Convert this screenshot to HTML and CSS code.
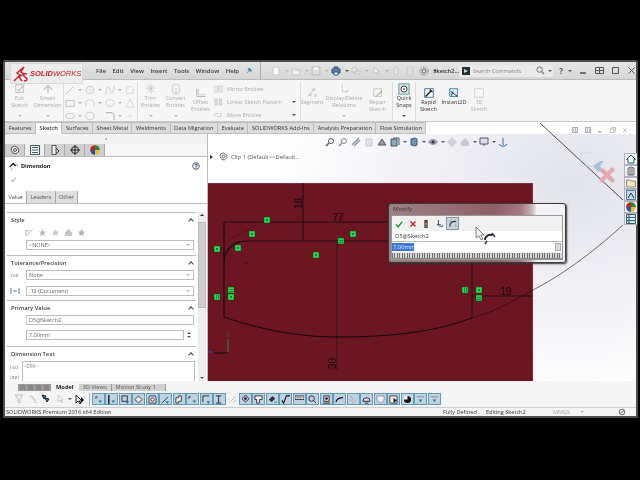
FILE: index.html
```html
<!DOCTYPE html>
<html lang="en">
<head>
<meta charset="utf-8">
<title>SOLIDWORKS</title>
<link rel="stylesheet" href="styles.css">
</head>
<body>
<div class="app">
  <header class="titlebar">
    <div class="logo">
      <svg class="logo-mark" viewBox="0 0 16 16"><path d="M1 15 7 9 4 7 11 1 8 6 11 8 6 11 9 15M11 15c3 0 4-2 2-3l-2-2c-1-2 1-3 3-2" fill="none" stroke="#c8202c" stroke-width="1.400"/></svg>
      <span class="logo-text">SOLID<span class="logo-thin">WORKS</span></span>
    </div>
    <nav class="menu"><span>File</span><span>Edit</span><span>View</span><span>Insert</span><span>Tools</span><span>Window</span><span>Help</span></nav>
    <svg class="pin" viewBox="0 0 8 8"><path d="M1 7 4 4M3 2l3 3M4 1l3 3-2 1-2-2z" stroke="#2b7f9e" fill="#3a9ac0"/></svg>
    <div class="quick">
      <svg class="qi" viewBox="0 0 10 10"><path d="M2 1h4l2 2v6H2z" fill="#fafafa" stroke="#c4c4c4"/></svg><i class="caret"></i>
      <svg class="qi" viewBox="0 0 10 10"><path d="M1 3h3l1 1h4v5H1z" fill="#eee" stroke="#c4c4c4"/></svg><i class="caret"></i>
      <svg class="qi" viewBox="0 0 10 10"><path d="M1 1h8v8H1z" fill="#ddd" stroke="#bbb"/><path d="M3 1h4v3H3z" fill="#f4f4f4"/></svg><i class="caret"></i>
      <svg class="qi" viewBox="0 0 10 10"><path d="M3 1h4v2h2v4H1V3h2z" fill="#5b80ac" stroke="#33557f"/><path d="M3 6h4v3H3z" fill="#fff" stroke="#33557f"/></svg><i class="caret dark"></i>
      <svg class="qi" viewBox="0 0 10 10"><path d="M1 2h5v4H1zM4 5h5v3H4z" fill="#e8e8e8" stroke="#c4c4c4"/></svg><i class="caret"></i>
      <svg class="qi" viewBox="0 0 10 10"><path d="M3 1v7l2-2 2 3 1-1-2-2h2z" fill="#f4f4f4" stroke="#c4c4c4"/></svg><i class="caret"></i>
      <svg class="qi" viewBox="0 0 10 10"><rect x="3" y="1" width="4" height="8" rx="2" fill="#e4e4e4" stroke="#c8c8c8"/></svg>
      <svg class="qi" viewBox="0 0 10 10"><path d="M2 1h6v8H2zM2 3h6M2 5h6M2 7h6" fill="#eee" stroke="#c8c8c8"/></svg>
      <svg class="qi" viewBox="0 0 10 10"><circle cx="5" cy="5" r="2" fill="none" stroke="#666"/><circle cx="5" cy="5" r="4" fill="none" stroke="#777" stroke-dasharray="1.500 1"/></svg><i class="caret dark"></i>
    </div>
    <span class="doc-name">Sketch2...</span>
    <div class="search">
      <svg class="search-ic" viewBox="0 0 8 8"><path d="M0 0h8v8H0z" fill="#26323a"/><path d="M2 2l4 2-4 2z" fill="#cfd8dd"/></svg>
      <span class="search-text">Search Commands</span>
      <svg class="lens" viewBox="0 0 10 10"><circle cx="4" cy="4" r="3" fill="none" stroke="#666"/><path d="M6 6l3 3" stroke="#666" stroke-width="1.200"/></svg>
      <i class="caret dark"></i>
    </div>
    <div class="winctl">
      <span class="help">?</span><i class="caret dark"></i>
      <svg class="wc" viewBox="0 0 9 9"><path d="M1 7h6" stroke="#444" stroke-width="1.400"/></svg>
      <svg class="wc" viewBox="0 0 9 9"><path d="M.5 1.500h8v6h-8zM4.500 1.500v6M.5 4.500h8" fill="none" stroke="#555"/></svg>
      <svg class="wc" viewBox="0 0 9 9"><path d="M1.500 1.500h6v6h-6z" fill="none" stroke="#555"/></svg>
      <svg class="wc" viewBox="0 0 9 9"><path d="M1.500 1.500l6 6M7.500 1.500l-6 6" stroke="#555"/></svg>
    </div>
  </header>

  <section class="ribbon">
    <div class="rgroup g1">
      <div class="rb w27"><svg class="ri" viewBox="0 0 14 14"><path d="M2 2h9v9H2z" fill="none" stroke="#bbb"/><path d="M4 7l2 2 6-7" fill="none" stroke="#b9c9b9" stroke-width="1.400"/></svg><span>Exit<br>Sketch</span><i class="caret"></i></div>
      <div class="rb w29"><svg class="ri" viewBox="0 0 14 14"><path d="M2 8l5-5 5 5M7 3v9" fill="none" stroke="#bbb" stroke-width="1.300"/></svg><span>Smart<br>Dimension</span><i class="caret"></i></div>
    </div>
    <div class="rgroup g2">
      <div class="tool-grid">
        <svg class="ti" viewBox="0 0 12 12"><path d="M1 11 10 2" stroke="#c4c4c4" stroke-width="1.200"/></svg><i class="caret"></i>
        <svg class="ti" viewBox="0 0 12 12"><circle cx="6" cy="6" r="4.500" fill="none" stroke="#c4c4c4"/><circle cx="6" cy="6" r="1" fill="#c4c4c4"/></svg><i class="caret"></i>
        <svg class="ti" viewBox="0 0 12 12"><path d="M1 11C2 0 5 0 6 6s4 6 5-5" fill="none" stroke="#c4c4c4"/></svg><i class="caret"></i>
        <svg class="ti" viewBox="0 0 12 12"><path d="M2 2h6l2 2v6H2z" fill="none" stroke="#d0d0d0"/></svg>
        <svg class="ti" viewBox="0 0 12 12"><path d="M1 3h10v7H1z" fill="none" stroke="#bbb"/></svg><i class="caret"></i>
        <svg class="ti" viewBox="0 0 12 12"><path d="M1 10V7a5 5 0 0 1 10 0v3" fill="none" stroke="#c4c4c4"/></svg><i class="caret"></i>
        <svg class="ti" viewBox="0 0 12 12"><ellipse cx="6" cy="6" rx="5" ry="4" fill="none" stroke="#c4c4c4"/></svg><i class="caret"></i>
        <svg class="ti" viewBox="0 0 12 12"><path d="M6 1l5 10H1z" fill="none" stroke="#d0d0d0"/></svg>
        <svg class="ti" viewBox="0 0 12 12"><rect x="1" y="3" width="10" height="6" rx="3" fill="none" stroke="#c4c4c4"/></svg><i class="caret"></i>
        <svg class="ti" viewBox="0 0 12 12"><path d="M3.500 1.500h5l3 4.500-3 4.500h-5L.5 6z" fill="none" stroke="#c4c4c4"/></svg><i class="blank"></i>
        <svg class="ti" viewBox="0 0 12 12"><path d="M1 2h6c3 0 4 2 4 5v4" fill="none" stroke="#aaa" stroke-width="1.200"/></svg><i class="caret"></i>
        <svg class="ti small" viewBox="0 0 12 12"><path d="M4 4h4v4H4z" fill="none" stroke="#ccc"/></svg>
      </div>
    </div>
    <div class="rgroup g3">
      <div class="rb w25"><svg class="ri" viewBox="0 0 14 14"><path d="M1 6h12M7 1v12M3 2l8 9M11 2l-8 9" fill="none" stroke="#c4c4c4"/></svg><span>Trim<br>Entities</span><i class="caret"></i></div>
      <div class="rb w25"><svg class="ri" viewBox="0 0 14 14"><path d="M3 3l4-2 4 2v8l-4 2-4-2zM7 5v8" fill="none" stroke="#c4c4c4"/></svg><span>Convert<br>Entities</span><i class="caret"></i></div>
      <div class="rb w25 low"><svg class="ri" viewBox="0 0 14 14"><path d="M2 2v9h10" fill="none" stroke="#aaa"/><path d="M4 2v7h8" fill="none" stroke="#ccc"/></svg><span>Offset<br>Entities</span></div>
      <ul class="rlist">
        <li><svg class="li" viewBox="0 0 12 10"><path d="M6 0v10M1 1h3v8H1zM8 1h3v8H8z" fill="none" stroke="#c4c4c4"/></svg>Mirror Entities</li>
        <li><svg class="li" viewBox="0 0 12 10"><path d="M1 1h3v3H1zM7 1h3v3H7zM1 6h3v3H1zM7 6h3v3H7z" fill="none" stroke="#b4b4b4"/></svg>Linear Sketch Pattern<i class="caret push dark"></i></li>
        <li><svg class="li" viewBox="0 0 12 10"><path d="M1 8V3h5M9 2v5H4" fill="none" stroke="#c4c4c4"/></svg>Move Entities<i class="caret push dark"></i></li>
      </ul>
    </div>
    <div class="rgroup g4">
      <div class="rb w22 low"><svg class="ri" viewBox="0 0 14 14"><path d="M2 11l4-4 3-4M4 8h2v2H4zM8 2h2v2H8zM10 9h2v2h-2z" fill="none" stroke="#c4c4c4"/></svg><span>Segment</span></div>
      <div class="rb w42"><svg class="ri" viewBox="0 0 14 14"><path d="M5 1v9h7M8 10a2 2 0 1 0 3-3" fill="none" stroke="#c4c4c4"/></svg><span>Display/Delete<br>Relations</span><i class="caret"></i></div>
      <div class="rb w25 low"><svg class="ri" viewBox="0 0 14 14"><path d="M2 2h9v9H2z" fill="none" stroke="#c4c4c4"/><path d="M5 11l7-7" stroke="#c8b890" stroke-width="1.500"/></svg><span>Repair<br>Sketch</span></div>
    </div>
    <div class="rgroup g5">
      <div class="rb w22"><svg class="ri qs" viewBox="0 0 14 14"><path d="M1 1h12v12H1z" fill="#d8e6ea" stroke="#5a8a9a"/><circle cx="7" cy="7" r="3.500" fill="#fff" stroke="#222"/><circle cx="7" cy="7" r="1" fill="#222"/></svg><span class="on">Quick<br>Snaps</span><i class="caret dark"></i></div>
    </div>
    <div class="rgroup g6">
      <div class="rb w25 low"><svg class="ri" viewBox="0 0 14 14"><path d="M2 2h10v10H2z" fill="#fff" stroke="#236a84"/><path d="M3 11l6-6M8 3l3 3" stroke="#111" stroke-width="1.500"/></svg><span class="on">Rapid<br>Sketch</span></div>
      <div class="rb w26 low"><svg class="ri" viewBox="0 0 14 14"><path d="M2 2h9v9H2z" fill="#dceff5" stroke="#1f7a9a"/><path d="M3 5l8 6M4 10l2-5" stroke="#123" stroke-width="1"/></svg><span class="on">Instant2D</span></div>
      <div class="rb w24 low"><svg class="ri" viewBox="0 0 14 14"><path d="M2 2h10v10H2z" fill="#fafafa" stroke="#c8c8c8"/></svg><span>3D<br>Sketch</span></div>
    </div>
  </section>

  <nav class="tabs">
    <span class="tab">Features</span><span class="tab active">Sketch</span><span class="tab">Surfaces</span><span class="tab">Sheet Metal</span><span class="tab">Weldments</span><span class="tab">Data Migration</span><span class="tab">Evaluate</span><span class="tab">SOLIDWORKS Add-Ins</span><span class="tab">Analysis Preparation</span><span class="tab">Flow Simulation</span>
  </nav>

  <main class="workspace">
    <aside class="panel">
      <div class="grip"><i></i></div>
      <div class="ptabs">
        <span class="ptab"><svg viewBox="0 0 10 10"><path d="M2 2l3-1 3 2 1 3-3 3-3-1-2-3z" fill="#eee" stroke="#555"/><circle cx="5" cy="5" r="1.500" fill="none" stroke="#555"/></svg></span>
        <span class="ptab on"><svg viewBox="0 0 10 10"><path d="M.5 .5h9v9h-9z" fill="#f4f4f4" stroke="#3d5c63"/><path d="M2 2.500h6M2 5h6M2 7.500h6" stroke="#3d5c63"/></svg></span>
        <span class="ptab"><svg viewBox="0 0 10 10"><path d="M2 .5h4v9H2z" fill="#eee" stroke="#555"/><path d="M6 3l3 3-3 3" fill="none" stroke="#333"/></svg></span>
        <span class="ptab"><svg viewBox="0 0 10 10"><circle cx="5" cy="5" r="3.500" fill="none" stroke="#222"/><path d="M0 5h10M5 0v10" stroke="#222"/></svg></span>
        <span class="ptab"><svg viewBox="0 0 10 10"><circle cx="5" cy="5" r="4.800" fill="#e2c21b"/><path d="M5 5V.2A4.800 4.800 0 0 1 9.800 5z" fill="#2c8a3c"/><path d="M5 5H.2A4.800 4.800 0 0 1 5 .2z" fill="#c8202c"/><path d="M5 5v4.800A4.800 4.800 0 0 1 .2 5z" fill="#2b4fb0"/></svg></span>
      </div>
      <div class="pm-head">
        <svg class="dim-ic" viewBox="0 0 12 12"><path d="M1 7l4-4 3 3" fill="none" stroke="#111" stroke-width="1.500"/><path d="M2 11l2-2M9 4l2 2" stroke="#267" stroke-width="1"/></svg>
        <strong>Dimension</strong>
        <svg class="help-ic" viewBox="0 0 9 9"><circle cx="4.500" cy="4.500" r="3.800" fill="#dde6ee" stroke="#5a6a7a"/><path d="M3.300 3.500c0-1.500 2.500-1.500 2.500 0 0 1-1.200 1-1.200 2M4.500 6.500v1" fill="none" stroke="#334"/></svg>
      </div>
      <svg class="pm-check" viewBox="0 0 8 8"><path d="M1 4.500 3 6.500 7 1.500" fill="none" stroke="#bbb" stroke-width="1.200"/></svg>
      <div class="subtabs"><span class="st on">Value</span><span class="st">Leaders</span><span class="st">Other</span></div>
      <div class="pm-scrollarea">
        <div class="sections">
          <section class="sec first">
            <h3>Style<i class="chev"></i></h3>
            <div class="style-ics">
              <svg viewBox="0 0 10 10"><path d="M1 9V3h4M2 8l6-6" fill="none" stroke="#aaa"/></svg>
              <svg viewBox="0 0 10 10"><path d="M5 1l1.200 2.800L9 4 7 6l.6 3L5 7.500 2.400 9 3 6 1 4l2.800-.2z" fill="#bbb"/></svg>
              <svg viewBox="0 0 10 10"><path d="M5 1l1.200 2.800L9 4 7 6l.6 3L5 7.500 2.400 9 3 6 1 4l2.800-.2z" fill="#c8c8c8"/></svg>
              <svg viewBox="0 0 10 10"><path d="M1 5l4-4 4 4v4H1z" fill="#c4c4c4"/></svg>
              <svg viewBox="0 0 10 10"><path d="M5 1l1.200 2.800L9 4 7 6l.6 3L5 7.500 2.400 9 3 6 1 4l2.800-.2z" fill="#b4b4b4"/></svg>
            </div>
            <div class="field sel">&lt;NONE&gt;<i class="caret"></i></div>
          </section>
          <section class="sec tol">
            <h3>Tolerance/Precision<i class="chev"></i></h3>
            <div class="row"><svg class="lab" viewBox="0 0 10 10"><text x="0" y="7" class="mini">1.50</text></svg><div class="field sel">None<i class="caret"></i></div></div>
            <div class="row"><svg class="lab" viewBox="0 0 10 10"><path d="M1 2v6M9 2v6M3 5h4" stroke="#4a7fb0"/></svg><div class="field sel">.12 (Document)<i class="caret"></i></div></div>
          </section>
          <section class="sec">
            <h3>Primary Value<i class="chev"></i></h3>
            <div class="field">D5@Sketch2</div>
            <div class="spin-row"><div class="field">7.00mm</div><div class="spin"><i class="up"></i><i class="caret dark"></i></div></div>
          </section>
          <section class="sec">
            <h3>Dimension Text<i class="chev"></i></h3>
            <div class="dtext">
              <div class="dlabs"><span>(xx)</span><span>(øø)</span></div>
              <div class="area">&lt;DIM&gt;</div>
            </div>
          </section>
        </div>
        <div class="scroll"><i class="sc-up"></i><div class="thumb"></div><i class="caret dark"></i></div>
      </div>
    </aside>

    <div class="graphics">
      <svg class="drawing" viewBox="208 134 428 247" preserveAspectRatio="none">
        <path d="M540 123 623 200" fill="none" stroke="#222" stroke-width=".8"/>
        <rect x="208" y="183" width="325" height="198" fill="#6e1522"/>
        <rect x="532" y="183" width="1" height="198" fill="#a02035"/>
        <rect x="208" y="183" width="325" height="1" fill="#843040"/>
        <path d="M224 222H388M247 241H388M303 183V241M472 262V318M472 296H533" fill="none" stroke="#151014" stroke-width=".9"/>
        <path d="M224 222V317M224 264C224 250 232 241 247 241" fill="none" stroke="#0c0a0c" stroke-width="1.100"/>
        <path d="M224 243 262 222" fill="none" stroke="#44141c" stroke-width=".7"/>
        <path d="M337 241V370" fill="none" stroke="#3a1016" stroke-width="1"/>
        <path d="M224 317C270 333 310 337 337 337 400 337 440 330 472 318" fill="none" stroke="#0c0a0c" stroke-width="1"/>
        <path d="M472 318C495 312 515 300 533 290" fill="none" stroke="#25080e" stroke-width=".7"/>
        <path d="M533 290C560 276 590 255 623 225" fill="none" stroke="#333" stroke-width=".7"/>
        <path d="M246 263h1M246 263v1" stroke="#111"/>
        <g class="dim-text">
          <text x="338" y="221" text-anchor="middle">77</text>
          <text x="506" y="295" text-anchor="middle">19</text>
          <text transform="translate(302 209) rotate(-90)">18</text>
          <text transform="translate(336 369) rotate(-90)">30</text>
        </g>
        <g fill="#1fe04c" stroke="#0b3a15" stroke-width=".4">
          <rect x="264" y="217" width="6" height="6"/><rect x="249" y="231" width="6" height="6"/><rect x="235" y="245" width="6" height="6"/><rect x="214" y="246" width="6" height="6"/><rect x="313" y="252" width="6" height="6"/><rect x="350" y="231" width="6" height="6"/><rect x="338" y="238" width="6" height="6"/>
          <rect x="228" y="287" width="6" height="6"/><rect x="228" y="294" width="6" height="6"/><rect x="214" y="294" width="6" height="6"/>
          <rect x="462" y="287" width="6" height="6"/><rect x="476" y="287" width="6" height="6"/><rect x="476" y="295" width="6" height="6"/>
        </g>
        <g fill="#1a7a4a">
          <rect x="266" y="219" width="2" height="2"/><rect x="251" y="233" width="2" height="2"/><rect x="237" y="247" width="2" height="2"/><rect x="216" y="248" width="2" height="2"/><rect x="315" y="254" width="2" height="2"/><rect x="352" y="233" width="2" height="2"/>
          <rect x="230" y="296" width="2" height="2"/><rect x="478" y="289" width="2" height="2"/>
          <rect x="216" y="295" width="1" height="4"/><rect x="218" y="295" width="1" height="4"/><rect x="464" y="288" width="1" height="4"/><rect x="466" y="288" width="1" height="4"/>
          <rect x="339" y="240" width="4" height="1"/><rect x="339" y="242" width="4" height="1"/><rect x="229" y="289" width="4" height="1"/><rect x="229" y="291" width="4" height="1"/><rect x="477" y="297" width="4" height="1"/><rect x="477" y="299" width="4" height="1"/>
        </g>
        <path d="M228 339V352" stroke="#2f7a3a" stroke-width="1.200"/>
        <path d="M214 353H228" stroke="#111" stroke-width="1.200"/>
        <path d="M209 352h3" stroke="#3b3bb0" stroke-width="2"/>
        <text x="226" y="337" class="axis">Y</text>
      </svg>

      <div class="clip"><i class="arrow"></i><svg viewBox="0 0 10 10"><path d="M2 2l3-1 3 2 1 3-3 3-3-1-2-3z" fill="#eee" stroke="#666"/><circle cx="5" cy="5" r="1.500" fill="none" stroke="#666"/></svg>Clip 1 (Default&lt;&lt;Default...</div>
      <div class="view-tools">
        <svg viewBox="0 0 10 10"><circle cx="6" cy="4" r="2.500" fill="none" stroke="#556"/><path d="M4 6 1 9" stroke="#556" stroke-width="1.500"/></svg>
        <svg viewBox="0 0 10 10"><circle cx="6" cy="4" r="2.500" fill="none" stroke="#889"/><path d="M4 6 1 9" stroke="#889" stroke-width="1.500"/></svg>
        <svg viewBox="0 0 10 10"><path d="M1 8 8 1M3 9l6-6" stroke="#89a" stroke-width="1.500"/></svg>
        <svg viewBox="0 0 10 10"><path d="M2 2h6v7H2z" fill="#e2e2e8" stroke="#c8c8d0"/></svg>
        <svg viewBox="0 0 10 10"><path d="M1 8 5 2l4 6z" fill="#99a" stroke="#556"/></svg>
        <svg viewBox="0 0 10 10"><path d="M1 2h6v7H1z" fill="#8ab" stroke="#456"/><path d="M3 1h6v7" fill="none" stroke="#456"/></svg><i class="caret dark"></i>
        <svg viewBox="0 0 10 10"><path d="M2 2l4-1 2 1v6l-2 1-4-1z" fill="#6f98b8" stroke="#3a5a78"/></svg><i class="caret dark"></i>
        <svg viewBox="0 0 10 10"><path d="M0 5c3-4 7-4 10 0-3 4-7 4-10 0z" fill="#99a"/><circle cx="5" cy="5" r="1.500" fill="#334"/></svg><i class="caret dark"></i>
        <svg viewBox="0 0 10 10"><path d="M5 0l5 5-5 5-5-5z" fill="#cfd0d8"/></svg>
        <svg viewBox="0 0 10 10"><path d="M1 5l4-4 4 4v4H1z" fill="#c8c8d0"/></svg><i class="caret dark"></i>
        <svg viewBox="0 0 10 10"><path d="M1 1h8v6H1z" fill="#dde" stroke="#556"/><path d="M5 7v2" stroke="#556"/></svg><i class="caret dark"></i>
        <svg viewBox="0 0 10 10"><path d="M5 1v7M1 7c2 3 6 3 8 0" fill="none" stroke="#36a"/></svg>
      </div>

      <div class="doc-ctl">
        <svg viewBox="0 0 8 8"><path d="M.5 .5h7v7h-7zM5 .5v7M3 2l-1.500 2L3 6" fill="none" stroke="#8a8a92"/></svg>
        <svg viewBox="0 0 8 8"><path d="M.5 .5h7v7h-7zM3 .5v7M5 2l1.500 2L5 6" fill="none" stroke="#8a8a92"/></svg>
        <svg viewBox="0 0 8 8"><path d="M1 6.500h5" stroke="#777" stroke-width="1.200"/></svg>
        <svg viewBox="0 0 8 8"><path d="M.5 2.500h5v5h-5zM2.500 2V.5h5v5H6" fill="none" stroke="#aaa"/></svg>
        <svg viewBox="0 0 8 8"><path d="M1 1l6 6M7 1 1 7" stroke="#bbb"/></svg>
      </div>

      <svg class="confirm" viewBox="0 0 36 36">
        <path d="M1 1H11M1 1V14H12" fill="none" stroke="#bcd3e6" stroke-width=".8"/>
        <path d="M13 14 20 9 24 9 20 14 23 18 18 20z" fill="#a8c2d8"/>
        <path d="M24 18 28 22 33 17 36 20 31 25 36 30 33 33 28 28 23 33 20 30 25 25 21 21z" transform="translate(-1 -2)" fill="#e3a9b0"/>
      </svg>

      <div class="taskpane">
        <span class="tp"><svg viewBox="0 0 10 10"><path d="M5 1 .5 5.500H2V9h6V5.500h1.500z" fill="#fff" stroke="#1c5a72"/></svg></span>
        <span class="tp"><svg viewBox="0 0 10 10"><path d="M2 2l3-1 3 1v7H2zM4 2v7M6 2v7" fill="#ececec" stroke="#666"/></svg></span>
        <span class="tp"><svg viewBox="0 0 10 10"><path d="M.5 2h4l1 1h4v6h-9z" fill="#f0e6b8" stroke="#888"/></svg></span>
        <span class="tp"><svg viewBox="0 0 10 10"><path d="M.5 .5h9v9h-9z" fill="#c4dce8" stroke="#4a7a94"/><path d="M2 8l3-5 3 5" stroke="#234" fill="none"/></svg></span>
        <span class="tp"><svg viewBox="0 0 10 10"><circle cx="5" cy="5" r="4.800" fill="#e2c21b"/><path d="M5 5V.2A4.800 4.800 0 0 1 9.800 5z" fill="#2c8a3c"/><path d="M5 5H.2A4.800 4.800 0 0 1 5 .2z" fill="#c8202c"/><path d="M5 5v4.800A4.800 4.800 0 0 1 .2 5z" fill="#2b4fb0"/></svg></span>
        <span class="tp"><svg viewBox="0 0 10 10"><path d="M.5 .5h9v9h-9zM.5 3.500h9M.5 6.500h9M3 .5v9" fill="#d8e6ee" stroke="#2e5f74"/></svg></span>
      </div>

      <div class="modify">
        <div class="modify-title">Modify</div>
        <div class="modify-body">
          <div class="modify-tools">
            <svg viewBox="0 0 10 10"><path d="M1 5.500 4 8.500 9 2" fill="none" stroke="#2f9a3c" stroke-width="1.800"/></svg>
            <svg viewBox="0 0 10 10"><path d="M2 2l6 6M8 2 2 8" stroke="#c82030" stroke-width="1.800"/></svg>
            <svg viewBox="0 0 10 10"><rect x="3" y="0" width="4" height="10" fill="#333"/><circle cx="5" cy="2" r="1.200" fill="#d04040"/><circle cx="5" cy="5" r="1.200" fill="#d0b040"/><circle cx="5" cy="8" r="1.200" fill="#40b050"/></svg>
            <svg viewBox="0 0 10 10"><path d="M3 0v6M1 6h5" stroke="#111"/><path d="M4 8h4c1 0 1-2 0-2" fill="none" stroke="#2a78b0" stroke-width="1.200"/></svg>
            <span class="modify-on"><svg viewBox="0 0 10 10"><path d="M1 8C1 3 5 1 9 2" fill="none" stroke="#234" stroke-width="1.500"/><path d="M1 3l2-2M8 6l1 2" stroke="#38a" stroke-width="1.200"/></svg></span>
          </div>
          <div class="modify-name">D5@Sketch2</div>
          <div class="modify-input"><span class="selected">7.00mm</span><div class="mini-spin"></div></div>
          <div class="wheel"></div>
        </div>
      </div>
      <svg class="cursor" viewBox="0 0 22 20">
        <path d="M1 1v11l3-2 2 4 2-1-2-4h3z" fill="#eee" stroke="#555" stroke-width=".7"/>
        <path d="M10 14C10 10 14 8 18 9" fill="none" stroke="#223" stroke-width="1.800"/>
        <path d="M10 18l2-3M17 7l3 4" stroke="#335" stroke-width="1.400"/>
      </svg>
    </div>
  </main>

  <div class="lower">
    <div class="model-tabs">
      <div class="navs"><i></i><i></i><i></i><i></i></div>
      <span class="mt on">Model</span><span class="mt">3D Views</span><span class="mt">Motion Study 1</span>
    </div>
    <div class="toolbar">
      <svg class="bt plain" viewBox="0 0 10 10"><path d="M1 1h8L6 5v4L4 8V5z" fill="#eee" stroke="#c0c0c0"/></svg>
      <svg class="bt plain" viewBox="0 0 10 10"><path d="M1 2l4 2 2 4 2 1M3 1l5 6" fill="none" stroke="#ccc"/></svg>
      <svg class="bt plain" viewBox="0 0 10 10"><path d="M1 1l4 1-2 3zM4 4l4 1-2 3z" fill="#2b7f9e" stroke="#123"/></svg>
      <svg class="bt plain" viewBox="0 0 10 10"><path d="M3 1v7l2-2 2 3 1-1-2-2h2z" fill="#f6f6f6" stroke="#ccc"/></svg>
      <i class="caret dark"></i>
      <svg class="bt plain" viewBox="0 0 10 10"><path d="M1 1v8l2-2 2 3 1-1-2-2h3z" fill="#fff" stroke="#222"/><path d="M6 3l3 3-3 3z" fill="#111"/></svg>
      <b class="tb-sep"></b>
      <span class="btn"><svg viewBox="0 0 10 10"><path d="M2 2h2M2 2v2" stroke="#334"/><path d="M5 6l4 0-2 3z" fill="#1f7a9a"/></svg></span>
      <span class="btn"><svg viewBox="0 0 10 10"><path d="M2 0v10" stroke="#111" stroke-width="1.500"/><path d="M5 6l4 0-2 3z" fill="#1f7a9a"/></svg></span>
      <span class="btn"><svg viewBox="0 0 10 10"><path d="M1 1h6v6H1z" fill="none" stroke="#223"/><path d="M5 7l4 0-2 3z" fill="#1f7a9a"/></svg></span>
      <span class="btn"><svg viewBox="0 0 10 10"><path d="M1 5l4-4 4 4-4 4z" fill="#eee" stroke="#334"/></svg></span>
      <span class="btn"><svg viewBox="0 0 10 10"><path d="M2 1h6l1 2v6H1V3z" fill="#e8e8e8" stroke="#334"/><circle cx="5" cy="5" r="2" fill="none" stroke="#334"/></svg></span>
      <span class="btn"><svg viewBox="0 0 10 10"><path d="M1 9 8 2" stroke="#334"/><path d="M5 7l4 0-2 3z" fill="#1f7a9a"/></svg></span>
      <span class="btn"><svg viewBox="0 0 10 10"><path d="M1 9V3h3V1h3v6H4v2z" fill="#eee" stroke="#334"/></svg></span>
      <span class="btn"><svg viewBox="0 0 10 10"><path d="M1 2h2M1 2v2" stroke="#111"/><path d="M5 6l4 0-2 3z" fill="#1f7a9a"/></svg></span>
      <span class="btn"><svg viewBox="0 0 10 10"><path d="M1 8V1h7" fill="none" stroke="#223"/><path d="M5 7l4 0-2 3z" fill="#1f7a9a"/></svg></span>
      <span class="btn"><svg viewBox="0 0 10 10"><path d="M1 1h6M1 9h6M4 1v8" stroke="#223"/></svg></span>
      <svg class="bt plain gap" viewBox="0 0 10 10"><path d="M1 9 8 2M5 9l3-3" stroke="#c8c8c8"/></svg>
      <span class="btn"><svg viewBox="0 0 10 10"><path d="M5 0 9 4 5 8 1 4z" fill="none" stroke="#223"/><circle cx="5" cy="4" r="1.500" fill="#223"/></svg></span>
      <span class="btn"><svg viewBox="0 0 10 10"><path d="M1 1h8v4H6v4H3V5H1z" fill="#fff" stroke="#223"/></svg></span>
      <span class="btn"><svg viewBox="0 0 10 10"><path d="M1 5 5 1l3 3-4 4z" fill="#334"/><path d="M7 8h3" stroke="#1f7a9a"/></svg></span>
      <span class="btn"><svg viewBox="0 0 10 10"><path d="M1 6l2 3 3-8h4" fill="none" stroke="#111" stroke-width="1.200"/></svg></span>
      <span class="btn"><svg viewBox="0 0 10 10"><path d="M0 1h10v4H0z" fill="#ddd" stroke="#334"/><path d="M2 3h6" stroke="#222" stroke-dasharray="1 1"/></svg></span>
      <span class="btn"><svg viewBox="0 0 10 10"><circle cx="4" cy="4" r="3" fill="none" stroke="#223"/><path d="M6 6l3 3" stroke="#223"/></svg></span>
      <span class="btn"><svg viewBox="0 0 10 10"><path d="M2 1h6v6H2zM1 9h8" fill="#e8e8e8" stroke="#223"/><circle cx="5" cy="4" r="1.500" fill="#223"/></svg></span>
      <span class="btn"><svg viewBox="0 0 10 10"><path d="M1 8c1-4 4-5 8-5" fill="none" stroke="#111" stroke-width="1.300"/></svg></span>
      <span class="btn"><svg viewBox="0 0 10 10"><path d="M1 1l7 7M1 5l4 4" stroke="#778" stroke-dasharray="1 1"/></svg></span>
      <span class="btn"><svg viewBox="0 0 10 10"><path d="M1 7a4 4 0 0 1 8 0zM3 9h4" fill="#ddd" stroke="#223"/></svg></span>
      <span class="btn"><svg viewBox="0 0 10 10"><path d="M1 1h8v5L5 9 1 6z" fill="#f0f0f0" stroke="#889"/></svg></span>
      <span class="btn"><svg viewBox="0 0 10 10"><path d="M1 1h8v8H1z" fill="#eee" stroke="#334"/><path d="M5 3v6l4-3z" fill="#223"/></svg></span>
      <span class="btn"><svg viewBox="0 0 10 10"><circle cx="5" cy="5" r="4.500" fill="#f4f4f4"/><path d="M5 1a4 4 0 0 1 0 8zM1 5h4v4a4 4 0 0 1-4-4z" fill="#111"/></svg></span>
      <span class="btn"><svg viewBox="0 0 10 10"><path d="M1 2h8" stroke="#889"/><path d="M3 5l4 0-2 3z" fill="#1f7a9a"/></svg></span>
      <span class="btn"><svg viewBox="0 0 10 10"><path d="M1 2h8" stroke="#889"/><path d="M3 5l4 0-2 3z" fill="#1f7a9a"/></svg></span>
    </div>
    <footer class="status">
      <span class="st-main">SOLIDWORKS Premium 2016 x64 Edition</span>
      <span class="st-a">Fully Defined</span>
      <span class="st-b">Editing Sketch2</span>
      <span class="st-c">MMGS</span><i class="caret"></i>
      <svg class="st-ic" viewBox="0 0 10 10"><circle cx="5" cy="5" r="3.500" fill="none" stroke="#555"/><path d="M2 7l6-4" stroke="#555"/></svg>
    </footer>
  </div>
</div>
</body>
</html>
```

FILE: styles.css
```css
* { box-sizing: border-box; }
html, body { margin: 0; height: 100%; }
body { background: #000; overflow: hidden; font-family: "Open Sans", "Liberation Sans", sans-serif; font-size: 6px; color: #333; }
i { display: block; font-style: normal; }

.app { width: 635px; height: 358px; margin: 60px 0 0 3px; background: #f4f4f4; border: 2px solid #4d4d4d; border-radius: 2px 2px 0 0; display: flex; flex-direction: column; filter: blur(.3px); }

.caret { width: 0; height: 0; border-left: 2px solid transparent; border-right: 2px solid transparent; border-top: 2px solid #b4b4b4; flex: none; }
.caret.dark { border-top-color: #555; }
.caret.push { margin-left: auto; }

.titlebar { height: 18px; flex: none; background: linear-gradient(#e4e4e4, #d6d6d6); display: flex; align-items: center; position: relative; border-bottom: 1px solid #bbb; }
.logo { position: absolute; left: 5px; top: 1px; width: 73px; height: 21px; background: #ececec; border: 1px solid #d8d8d8; display: flex; align-items: center; gap: 1px; padding-left: 2px; z-index: 2; }
.logo-mark { width: 16px; height: 16px; }
.logo-text { font: italic 700 7.500px "Liberation Sans", sans-serif; color: #c8202c; }
.logo-thin { font-weight: 400; }
.menu { margin-left: 91px; display: flex; gap: 6.500px; font-size: 6px; font-weight: 600; color: #3a3a3a; width: 148px; }
.pin { width: 7px; height: 7px; margin-left: 7px; }
.quick { margin-left: 7px; padding-left: 10px; height: 18px; border-left: 1px solid #aaa; display: flex; align-items: center; gap: 2px; width: 176px; }
.qi { width: 10px; height: 10px; flex: none; margin-right: 2px; }
.doc-name { font-weight: 600; font-size: 5.500px; margin-left: -2px; width: 27px; white-space: nowrap; color: #333; }
.search { width: 101px; height: 12px; background: #e9e9e9; display: flex; align-items: center; padding: 0 1px 0 3px; gap: 3px; }
.search-ic { width: 8px; height: 8px; flex: none; }
.search-text { font-size: 5.500px; color: #888; flex: 1; }
.lens { width: 9px; height: 9px; }
.winctl { display: flex; align-items: center; margin-left: 6px; gap: 5px; }
.help { font-size: 8px; font-weight: 700; color: #555; }
.wc { width: 9px; height: 9px; margin-left: 2px; }

.ribbon { height: 42px; flex: none; display: flex; background: #f5f5f5; border-bottom: 1px solid #c8c8c8; padding-top: 1px; }
.rgroup { display: flex; border-right: 1px solid #dcdcdc; height: 39px; margin-top: 1px; flex: none; }
.g1 { width: 59px; padding-left: 1px; }
.g2 { width: 74px; padding: 1px 0 0 0; }
.g3 { width: 163px; }
.g4 { width: 92px; }
.g5 { width: 23px; }
.g6 { width: 78px; border-right: none; }
.rb { display: flex; flex-direction: column; align-items: center; padding-top: 1px; font-size: 5.500px; line-height: 6.500px; color: #adadad; text-align: center; white-space: nowrap; }
.rb.low { padding-top: 5px; }
.rb span.on { color: #333; }
.rb .caret { margin-top: auto; margin-bottom: 4px; }
.ri { width: 12px; height: 12px; flex: none; }
.w22 { width: 22px; } .w24 { width: 24px; } .w25 { width: 25px; } .w26 { width: 26px; } .w27 { width: 27px; } .w29 { width: 29px; } .w42 { width: 42px; }
.tool-grid { display: grid; grid-template-columns: 12px 8px 12px 8px 12px 8px 12px; grid-auto-rows: 13px; align-items: center; justify-items: center; }
.ti { width: 10px; height: 10px; }
.ti.small { width: 6px; height: 6px; }
.rlist { list-style: none; margin: 0; padding: 3px 4px 0 1px; flex: 1; display: flex; flex-direction: column; gap: 5px; color: #aaa; font-size: 5.500px; }
.rlist li { display: flex; align-items: center; gap: 4px; height: 8px; white-space: nowrap; }
.li { width: 9px; height: 8px; flex: none; }

.tabs { height: 12px; flex: none; display: flex; background: #fff; font-size: 5.700px; }
.tab { padding: 0 3.500px; line-height: 11px; background: #dcdcdc; border: 1px solid #bcbcbc; border-width: 1px 1px 1px 0; color: #333; white-space: nowrap; }
.tab.active { background: #fff; font-weight: 600; border-bottom-color: #fff; }

.workspace { flex: 1; display: flex; min-height: 0; }
.panel { width: 203px; flex: none; background: #fff; border-right: 1px solid #bbb; display: flex; flex-direction: column; overflow: hidden; position: relative; }
.grip { height: 10px; flex: none; display: flex; justify-content: center; align-items: center; background: #f2f2f2; }
.grip i { width: 2px; height: 2px; border-radius: 1px; background: #aaa; }
.ptabs { display: flex; height: 13px; flex: none; background: #f6f6f6; border-bottom: 1px solid #bbb; }
.ptab { width: 20px; background: #cfcfcf; border-right: 1px solid #aaa; display: flex; align-items: center; justify-content: center; }
.ptab.on { background: #efefef; }
.ptab svg { width: 10px; height: 10px; }
.pm-head { height: 17px; flex: none; display: flex; align-items: center; padding: 0 6px 0 3px; font-size: 5.500px; gap: 2px; }
.pm-head strong { font-weight: 700; color: #222; flex: 1; }
.dim-ic { width: 10px; height: 10px; margin-left: 1px; }
.help-ic { width: 8px; height: 8px; margin-right: 1px; }
.pm-check { width: 7px; height: 7px; margin: 2px 0 0 5px; flex: none; }
.subtabs { display: flex; height: 13px; margin-top: 8px; flex: none; border-bottom: 1px solid #bbb; }
.st { padding: 0 3.500px; line-height: 12px; font-size: 5.500px; background: #dedede; border-right: 1px solid #aaa; color: #555; }
.st.on { background: #fff; color: #444; }
.pm-scrollarea { flex: 1; display: flex; min-height: 0; padding-top: 8px; }
.sections { flex: 1; min-width: 0; overflow: hidden; padding: 0 1px 0 2px; }
.sec { border-top: 1px solid #bbb; padding: 3px 2px 6px 3px; }
.sec.first { padding-bottom: 5px; }
.sec.tol { padding-bottom: 4px; }
.sec h3 { margin: 0 0 3px; font-size: 5.800px; font-weight: 600; color: #444; display: flex; justify-content: space-between; align-items: center; line-height: 8px; padding-left: 1px; }
.chev { width: 4px; height: 4px; border: solid #444; border-width: 1px 0 0 1px; transform: rotate(45deg); margin-right: 1px; margin-top: 2px; }
.style-ics { display: flex; gap: 4px; padding-left: 15px; height: 10px; margin-bottom: 2px; margin-top: 4px; }
.style-ics svg { width: 9px; height: 9px; }
.field { height: 10px; border: 1px solid #bdbdbd; background: #fff; font-size: 5.500px; color: #666; line-height: 8px; padding-left: 2px; margin-left: 16px; display: flex; align-items: center; justify-content: space-between; padding-right: 3px; flex: 1; }
.row { display: flex; align-items: center; margin-bottom: 6px; }
.row .field { margin-left: 6px; }
.row:last-child { margin-bottom: 0; }
.lab { width: 10px; height: 10px; flex: none; }
.mini { font-size: 4px; fill: #444; }
.sec > .field { margin-bottom: 5px; }
.sec > .field:last-child { margin-bottom: 0; }
.spin-row { display: flex; align-items: center; margin-top: 5px; }
.spin { width: 10px; display: flex; flex-direction: column; align-items: center; gap: 2px; }
.spin .up { width: 0; border-left: 2px solid transparent; border-right: 2px solid transparent; border-bottom: 2px solid #555; }
.dtext { display: flex; gap: 1px; }
.dlabs { width: 11px; display: flex; flex-direction: column; gap: 4px; padding-top: 3px; color: #888; font-size: 5px; flex: none; white-space: nowrap; }
.area { flex: 1; border: 1px solid #bbb; height: 30px; font-size: 4.500px; color: #888; padding: 1px; margin-right: -1px; }
.scroll { width: 8px; flex: none; background: #ededed; margin: 0 1px; display: flex; flex-direction: column; align-items: center; padding-top: 2px; height: 169px; }
.sc-up { width: 0; border-left: 2px solid transparent; border-right: 2px solid transparent; border-bottom: 2px solid #333; margin-bottom: 6px; }
.thumb { width: 8px; height: 86px; background: #cfcfcf; border: 1px solid #b8b8b8; margin-bottom: auto; }
.scroll .caret { margin-bottom: 2px; }

.graphics { flex: 1; position: relative; background: radial-gradient(ellipse 300px 220px at 85% 20%, #e2e2ec 0, #fff 100%); }
.drawing { position: absolute; inset: 0; width: 100%; height: 100%; overflow: visible; }
.dim-text text { font: 10px "Liberation Sans", sans-serif; fill: #0b0b0b; }
.axis { font: 6px "Liberation Sans", sans-serif; fill: #2f7a3a; }
.clip { position: absolute; left: 0; top: 18px; display: flex; align-items: center; gap: 3px; padding-left: 2px; white-space: nowrap; font-size: 5.800px; color: #555; }
.clip svg { width: 9px; height: 9px; }
.arrow { border-left: 3px solid #333; border-top: 2px solid transparent; border-bottom: 2px solid transparent; margin-right: 3px; }
.view-tools { position: absolute; left: 117px; top: 3px; display: flex; align-items: center; gap: 2px; }
.view-tools svg { width: 10px; height: 10px; flex: none; margin-right: 1px; }
.doc-ctl { position: absolute; right: 8px; top: -7px; display: flex; gap: 6.500px; }
.doc-ctl svg { width: 6px; height: 6px; }
.confirm { position: absolute; left: 372px; top: 18px; width: 36px; height: 36px; }
.taskpane { position: absolute; right: -1px; top: 19px; width: 13px; display: flex; flex-direction: column; }
.tp { height: 12px; width: 13px; background: #f4f4f8; border: 1px solid #b0b0c0; border-right: none; display: flex; align-items: center; justify-content: center; }
.tp svg { width: 10px; height: 10px; }

.modify { position: absolute; left: 180px; top: 69px; width: 178px; height: 60px; border-radius: 3px; border: 1px solid #3a3a3a; box-shadow: 1px 1px 2px #333; padding: 0 2px 2px; background: linear-gradient(90deg, #9c8285 0, #8f6169 60%, #a67a84 75%, #c9b0b5 81%, #f2f2f6 84%); display: flex; flex-direction: column; }
.modify-title { height: 11px; line-height: 11px; font-size: 6px; color: #333; padding-left: 2px; flex: none; }
.modify-body { background: #f0f0f0; flex: 1; display: flex; flex-direction: column; border: 1px solid #999; }
.modify-tools { display: flex; align-items: center; gap: 5.500px; height: 15px; padding-left: 3px; flex: none; }
.modify-tools svg { width: 8px; height: 8px; }
.modify-on { width: 13px; height: 13px; background: #c9d3dc; border: 1px solid #8a98a6; display: flex; align-items: center; justify-content: center; margin-left: -3px; }
.modify-name { height: 10px; background: #fff; font-size: 5.800px; color: #333; line-height: 10px; padding-left: 3px; flex: none; }
.modify-input { height: 11px; background: #fff; border-top: 1px solid #bbb; display: flex; align-items: center; padding: 0 1px 0 0; justify-content: space-between; flex: none; }
.selected { background: #3a78d4; color: #dfeaff; font-size: 5.800px; line-height: 8px; padding: 0 1px; width: 22px; }
.mini-spin { width: 6px; height: 8px; background: #ddd; border: 1px solid #aaa; }
.wheel { flex: 1; background: repeating-linear-gradient(90deg, #6b6b6b 0 1px, #d8d8d8 1px 2.500px); margin: 1px 0 0; border-bottom: 1px solid #888; }
.cursor { position: absolute; left: 267px; top: 92px; width: 22px; height: 20px; }

.lower { height: 35px; flex: none; background: #f4f4f4; display: flex; flex-direction: column; }
.model-tabs { height: 10px; flex: none; display: flex; align-items: flex-end; padding-left: 13px; }
.navs { width: 33px; height: 7px; background: #9b9b9b; display: flex; gap: 3px; align-items: center; padding-left: 2px; }
.navs i { width: 5px; height: 5px; background: #888; }
.mt { padding: 0 4px; line-height: 7px; font-size: 5.700px; background: #d0d0d0; color: #555; border-right: 1px solid #999; height: 7px; white-space: nowrap; }
.mt:last-child { padding-right: 9px; }
.mt.on { background: transparent; font-weight: 700; color: #222; border: none; padding: 0 5px; }
.toolbar { height: 14px; flex: none; display: flex; align-items: center; padding-left: 9px; margin-top: 1px; }
.bt { width: 10px; height: 10px; margin-right: 3.500px; flex: none; }
.bt.gap { margin: 0 1px 0 1px; }
.toolbar .caret { margin-right: 3px; }
.tb-sep { width: 1px; height: 13px; background: #aaa; margin: 0 2px 0 0; flex: none; }
.btn { width: 13px; height: 12px; background: #bfd3df; border: 1px solid #5f9cbc; margin-right: .500px; display: flex; align-items: center; justify-content: center; flex: none; }
.btn svg { width: 9px; height: 9px; }
.status { flex: 1; display: flex; align-items: center; border-top: 1px solid #ccc; padding-left: 1px; font-size: 5.600px; color: #333; margin-top: 1px; }
.st-main { width: 437px; white-space: nowrap; }
.st-a { width: 43px; white-space: nowrap; }
.st-b { width: 67px; white-space: nowrap; }
.st-c { width: 19px; color: #aaa; font-size: 5.500px; }
.status .caret { margin-left: 8px; margin-right: 34px; }
.st-ic { width: 8px; height: 8px; }
```
